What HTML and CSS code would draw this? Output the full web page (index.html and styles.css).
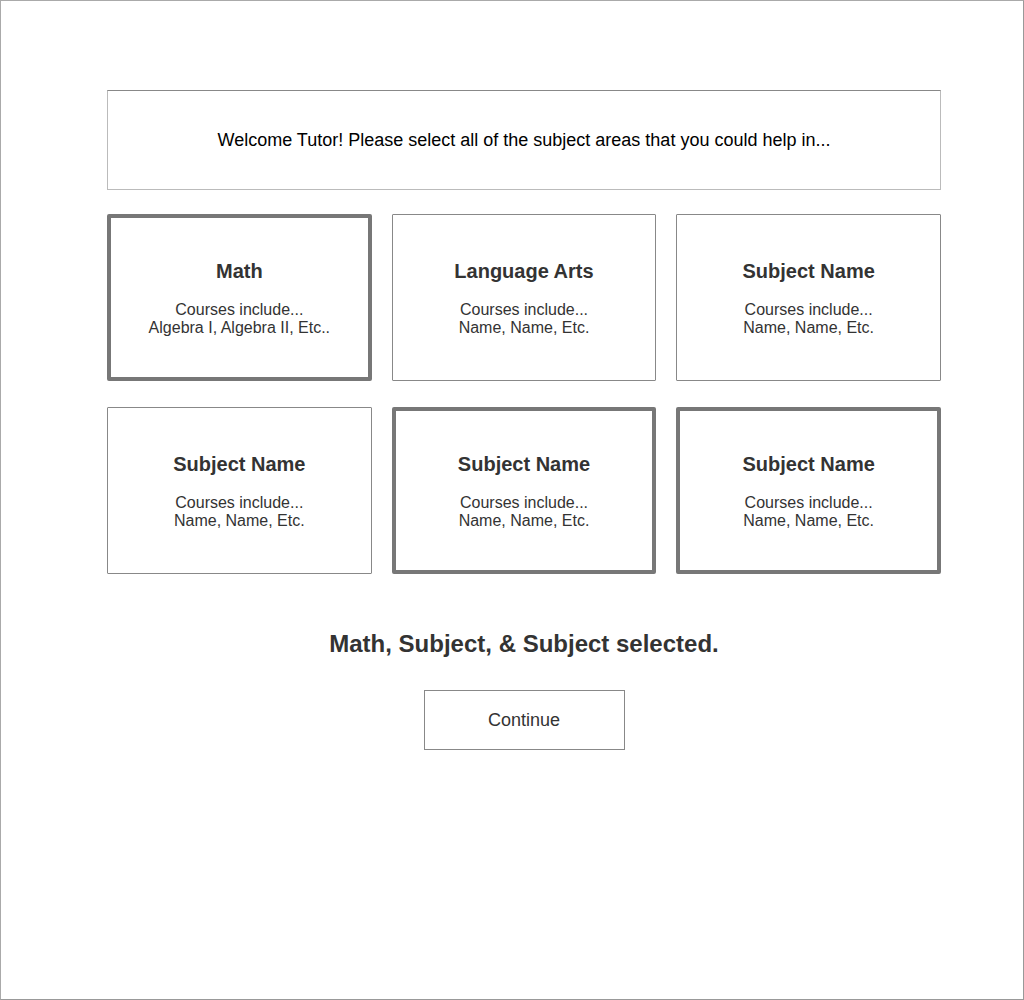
FILE: index.html
```html
<!DOCTYPE html>
<html>
<head>
<meta charset="utf-8">
<link rel="stylesheet" href="styles.css">
</head>
<body>
<div class="frame">
  <div class="content">
    <div class="welcome">Welcome Tutor! Please select all of the subject areas that you could help in...</div>
    <div class="grid">
      <div class="card selected">
        <div class="title">Math</div>
        <div class="courses">Courses include...<br>Algebra I, Algebra II, Etc..</div>
      </div>
      <div class="card">
        <div class="title">Language Arts</div>
        <div class="courses">Courses include...<br>Name, Name, Etc.</div>
      </div>
      <div class="card">
        <div class="title">Subject Name</div>
        <div class="courses">Courses include...<br>Name, Name, Etc.</div>
      </div>
      <div class="card">
        <div class="title">Subject Name</div>
        <div class="courses">Courses include...<br>Name, Name, Etc.</div>
      </div>
      <div class="card selected">
        <div class="title">Subject Name</div>
        <div class="courses">Courses include...<br>Name, Name, Etc.</div>
      </div>
      <div class="card selected">
        <div class="title">Subject Name</div>
        <div class="courses">Courses include...<br>Name, Name, Etc.</div>
      </div>
    </div>
    <div class="summary">Math, Subject, &amp; Subject selected.</div>
    <div class="actions">
      <button class="continue">Continue</button>
    </div>
  </div>
</div>
</body>
</html>
```

FILE: styles.css
```css
* { box-sizing: border-box; }
html, body { margin: 0; padding: 0; background: #fff; }
body { font-family: "Liberation Sans", Arial, sans-serif; color: #333; }

.frame {
  width: 1024px;
  height: 1000px;
  border: 1px solid #999;
  border-top-color: #aaa;
  border-left-color: #aaa;
  padding: 89px 0 0 106px;
}

.content {
  width: 834px;
  display: flex;
  flex-direction: column;
}

.welcome {
  height: 100px;
  border: 1px solid #bbb;
  border-top-color: #888;
  display: flex;
  align-items: center;
  justify-content: center;
  font-size: 18px;
  color: #000;
  padding-top: 1px;
}

.grid {
  margin-top: 24px;
  display: grid;
  grid-template-columns: repeat(3, 1fr);
  column-gap: 20px;
  row-gap: 26px;
}

.card {
  height: 167px;
  border: 1px solid #888;
  border-radius: 1px;
  display: flex;
  flex-direction: column;
  align-items: center;
  padding-top: 44px;
  text-align: center;
}

.card.selected {
  border: 4px solid #777;
  padding-top: 41px;
  border-radius: 2px;
}

.title {
  font-size: 20px;
  font-weight: bold;
  line-height: 24px;
}

.courses {
  margin-top: 18px;
  font-size: 16px;
  line-height: 18px;
}

.summary {
  margin-top: 56px;
  text-align: center;
  font-size: 24px;
  font-weight: bold;
  line-height: 28px;
}

.actions {
  margin-top: 32px;
  display: flex;
  justify-content: center;
}

.continue {
  width: 201px;
  height: 60px;
  border: 1px solid #888;
  background: #fff;
  font-family: "Liberation Sans", Arial, sans-serif;
  font-size: 18px;
  color: #333;
  padding: 0;
}
```
